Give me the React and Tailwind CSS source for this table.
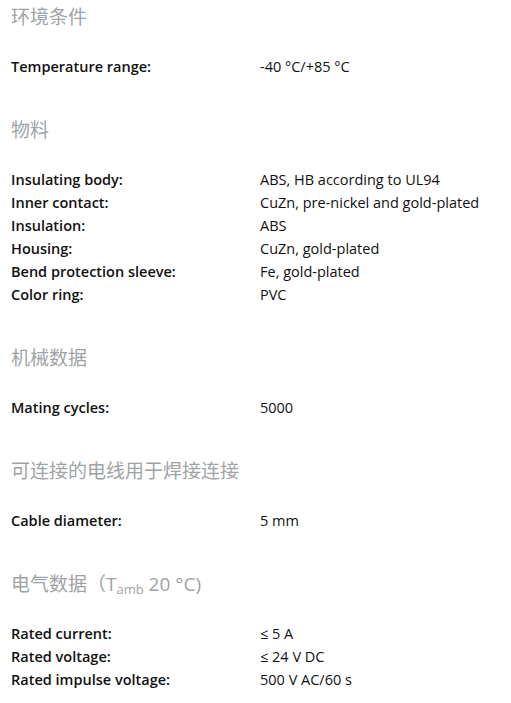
import React from "react";

const sections = [
  { title: "环境条件", rows: [["Temperature range:", "-40 °C/+85 °C"]] },
  {
    title: "物料",
    rows: [
      ["Insulating body:", "ABS, HB according to UL94"],
      ["Inner contact:", "CuZn, pre-nickel and gold-plated"],
      ["Insulation:", "ABS"],
      ["Housing:", "CuZn, gold-plated"],
      ["Bend protection sleeve:", "Fe, gold-plated"],
      ["Color ring:", "PVC"],
    ],
  },
  { title: "机械数据", rows: [["Mating cycles:", "5000"]] },
  { title: "可连接的电线用于焊接连接", rows: [["Cable diameter:", "5 mm"]] },
  {
    title: (
      <>
        电气数据（T<sub className="text-[13px] leading-none">amb</sub> 20 °C)
      </>
    ),
    rows: [
      ["Rated current:", "≤ 5 A"],
      ["Rated voltage:", "≤ 24 V DC"],
      ["Rated impulse voltage:", "500 V AC/60 s"],
    ],
  },
];

export default function App() {
  return (
    <div
      className="bg-white w-[511px] h-[703px] overflow-hidden pl-[11px] text-[#111]"
      style={{ fontFamily: '"Open Sans", "Noto Sans CJK SC", sans-serif' }}
    >
      {sections.map((s, i) => (
        <div key={i} className={i === 0 ? "pt-[4px]" : "pt-[39px]"}>
          <div className="text-[19px] leading-[26px] text-[#a0a3a6] h-[26px]">{s.title}</div>
          <div className="pt-[25px]">
            {s.rows.map(([k, v], j) => (
              <div key={j} className="flex text-[14.5px] leading-[23px] h-[23px]">
                <div className="w-[249px] font-semibold">{k}</div>
                <div>{v}</div>
              </div>
            ))}
          </div>
        </div>
      ))}
    </div>
  );
}
